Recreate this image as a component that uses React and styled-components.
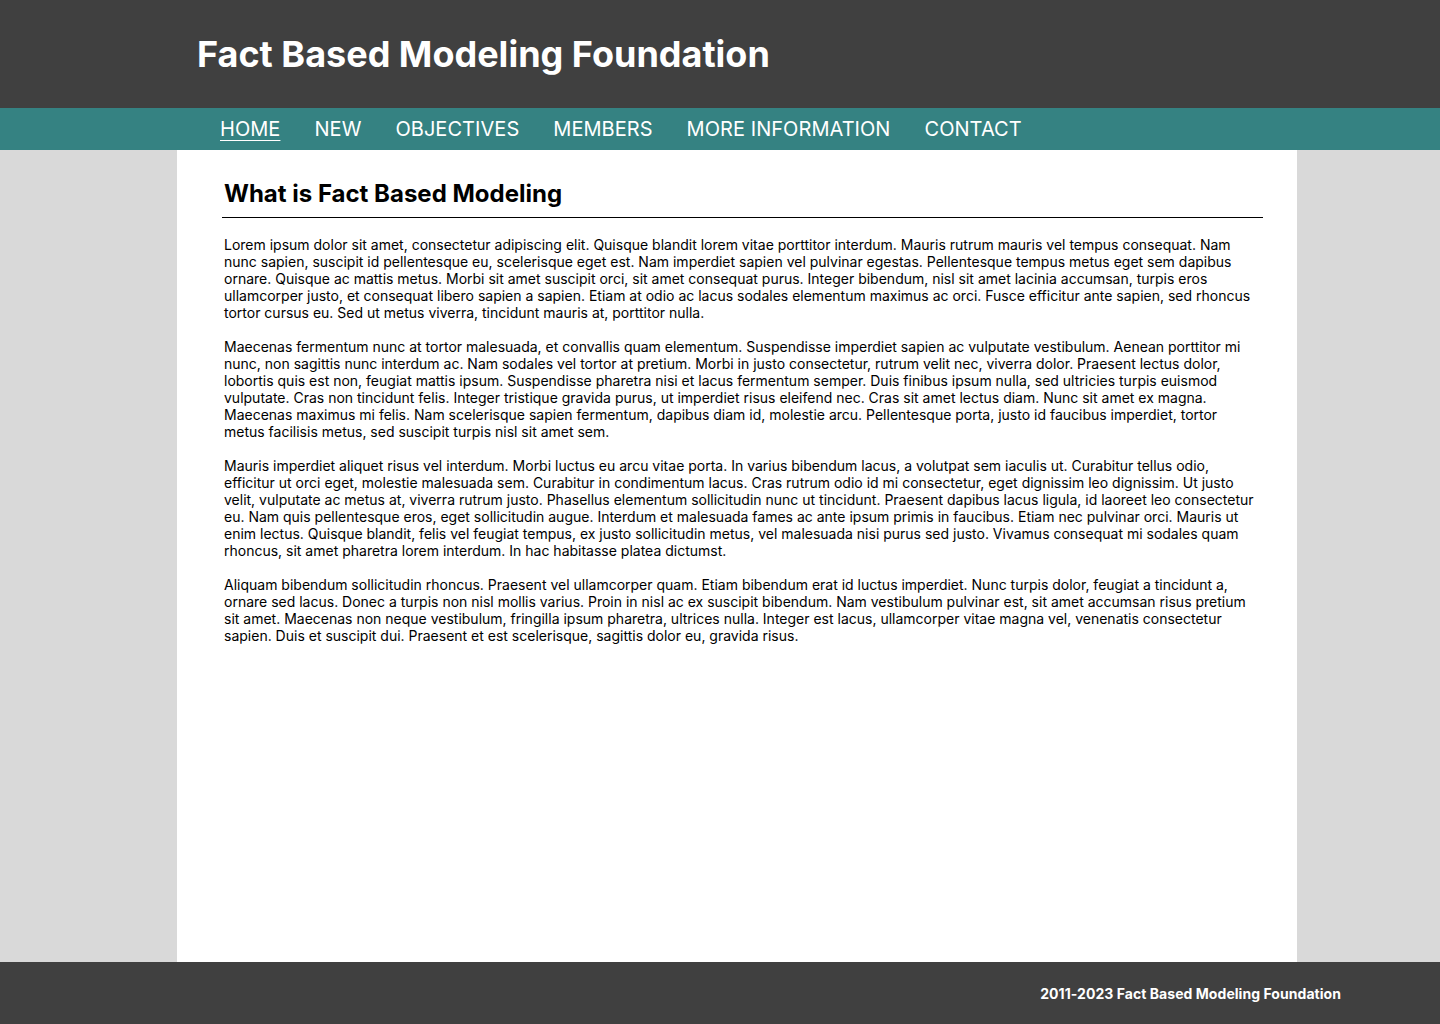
import React from "react";
import styled, { createGlobalStyle } from "styled-components";

const Global = createGlobalStyle`
  html, body { margin: 0; padding: 0; }
  body { background: #d9d9d9; font-family: Inter, "Noto Sans", sans-serif; }
  #root { min-height: 1024px; display: flex; flex-direction: column; }
`;

const Page = styled.div`
  min-height: 1024px;
  display: flex;
  flex-direction: column;
`;

const Header = styled.header`
  background: #404040;
  height: 108px;
  display: flex;
  align-items: center;
  padding-left: 197px;
  box-sizing: border-box;
`;

const SiteTitle = styled.h1`
  margin: 0;
  color: #fff;
  font-size: 36px;
  font-weight: 700;
  line-height: 44px;
`;

const Nav = styled.nav`
  background: #358282;
  height: 42px;
  display: flex;
  align-items: center;
  padding-left: 220px;
  gap: 34px;
`;

const NavLink = styled.a`
  color: #fff;
  font-size: 20px;
  font-weight: 400;
  letter-spacing: 0.05px;
  text-decoration: ${(p) => (p.$active ? "underline" : "none")};
  text-underline-offset: 4px;
  text-decoration-thickness: 1px;
  cursor: pointer;
`;

const Main = styled.main`
  flex: 1;
  width: 1120px;
  margin-left: 177px;
  background: #fff;
  box-sizing: border-box;
  padding: 29px 34px 40px 45px;
`;

const Heading = styled.h2`
  margin: 0 0 0 2px;
  font-size: 24px;
  font-weight: 700;
  color: #000;
  line-height: 30px;
`;

const Rule = styled.hr`
  border: none;
  border-top: 1px solid #000;
  margin: 8px 0 18px;
`;

const Para = styled.p`
  margin: 0 0 17px 2px;
  font-size: 14px;
  line-height: 17px;
  color: #000;
  padding-right: 2px;
`;

const Footer = styled.footer`
  background: #404040;
  height: 62px;
  display: flex;
  align-items: center;
  justify-content: flex-end;
  padding-right: 99px;
`;

const FooterText = styled.span`
  color: #fff;
  font-size: 14px;
  font-weight: 700;
  letter-spacing: 0.05px;
  margin-top: 1px;
`;

const links = ["HOME", "NEW", "OBJECTIVES", "MEMBERS", "MORE INFORMATION", "CONTACT"];

const paragraphs = [
  "Lorem ipsum dolor sit amet, consectetur adipiscing elit. Quisque blandit lorem vitae porttitor interdum. Mauris rutrum mauris vel tempus consequat. Nam nunc sapien, suscipit id pellentesque eu, scelerisque eget est. Nam imperdiet sapien vel pulvinar egestas. Pellentesque tempus metus eget sem dapibus ornare. Quisque ac mattis metus. Morbi sit amet suscipit orci, sit amet consequat purus. Integer bibendum, nisl sit amet lacinia accumsan, turpis eros ullamcorper justo, et consequat libero sapien a sapien. Etiam at odio ac lacus sodales elementum maximus ac orci. Fusce efficitur ante sapien, sed rhoncus tortor cursus eu. Sed ut metus viverra, tincidunt mauris at, porttitor nulla.",
  "Maecenas fermentum nunc at tortor malesuada, et convallis quam elementum. Suspendisse imperdiet sapien ac vulputate vestibulum. Aenean porttitor mi nunc, non sagittis nunc interdum ac. Nam sodales vel tortor at pretium. Morbi in justo consectetur, rutrum velit nec, viverra dolor. Praesent lectus dolor, lobortis quis est non, feugiat mattis ipsum. Suspendisse pharetra nisi et lacus fermentum semper. Duis finibus ipsum nulla, sed ultricies turpis euismod vulputate. Cras non tincidunt felis. Integer tristique gravida purus, ut imperdiet risus eleifend nec. Cras sit amet lectus diam. Nunc sit amet ex magna. Maecenas maximus mi felis. Nam scelerisque sapien fermentum, dapibus diam id, molestie arcu. Pellentesque porta, justo id faucibus imperdiet, tortor metus facilisis metus, sed suscipit turpis nisl sit amet sem.",
  "Mauris imperdiet aliquet risus vel interdum. Morbi luctus eu arcu vitae porta. In varius bibendum lacus, a volutpat sem iaculis ut. Curabitur tellus odio, efficitur ut orci eget, molestie malesuada sem. Curabitur in condimentum lacus. Cras rutrum odio id mi consectetur, eget dignissim leo dignissim. Ut justo velit, vulputate ac metus at, viverra rutrum justo. Phasellus elementum sollicitudin nunc ut tincidunt. Praesent dapibus lacus ligula, id laoreet leo consectetur eu. Nam quis pellentesque eros, eget sollicitudin augue. Interdum et malesuada fames ac ante ipsum primis in faucibus. Etiam nec pulvinar orci. Mauris ut enim lectus. Quisque blandit, felis vel feugiat tempus, ex justo sollicitudin metus, vel malesuada nisi purus sed justo. Vivamus consequat mi sodales quam rhoncus, sit amet pharetra lorem interdum. In hac habitasse platea dictumst.",
  "Aliquam bibendum sollicitudin rhoncus. Praesent vel ullamcorper quam. Etiam bibendum erat id luctus imperdiet. Nunc turpis dolor, feugiat a tincidunt a, ornare sed lacus. Donec a turpis non nisl mollis varius. Proin in nisl ac ex suscipit bibendum. Nam vestibulum pulvinar est, sit amet accumsan risus pretium sit amet. Maecenas non neque vestibulum, fringilla ipsum pharetra, ultrices nulla. Integer est lacus, ullamcorper vitae magna vel, venenatis consectetur sapien. Duis et suscipit dui. Praesent et est scelerisque, sagittis dolor eu, gravida risus.",
];

export default function App() {
  return (
    <Page>
      <Global />
      <Header>
        <SiteTitle>Fact Based Modeling Foundation</SiteTitle>
      </Header>
      <Nav>
        {links.map((l, i) => (
          <NavLink key={l} $active={i === 0}>
            {l}
          </NavLink>
        ))}
      </Nav>
      <Main>
        <Heading>What is Fact Based Modeling</Heading>
        <Rule />
        {paragraphs.map((p, i) => (
          <Para key={i}>{p}</Para>
        ))}
      </Main>
      <Footer>
        <FooterText>2011-2023 Fact Based Modeling Foundation</FooterText>
      </Footer>
    </Page>
  );
}
